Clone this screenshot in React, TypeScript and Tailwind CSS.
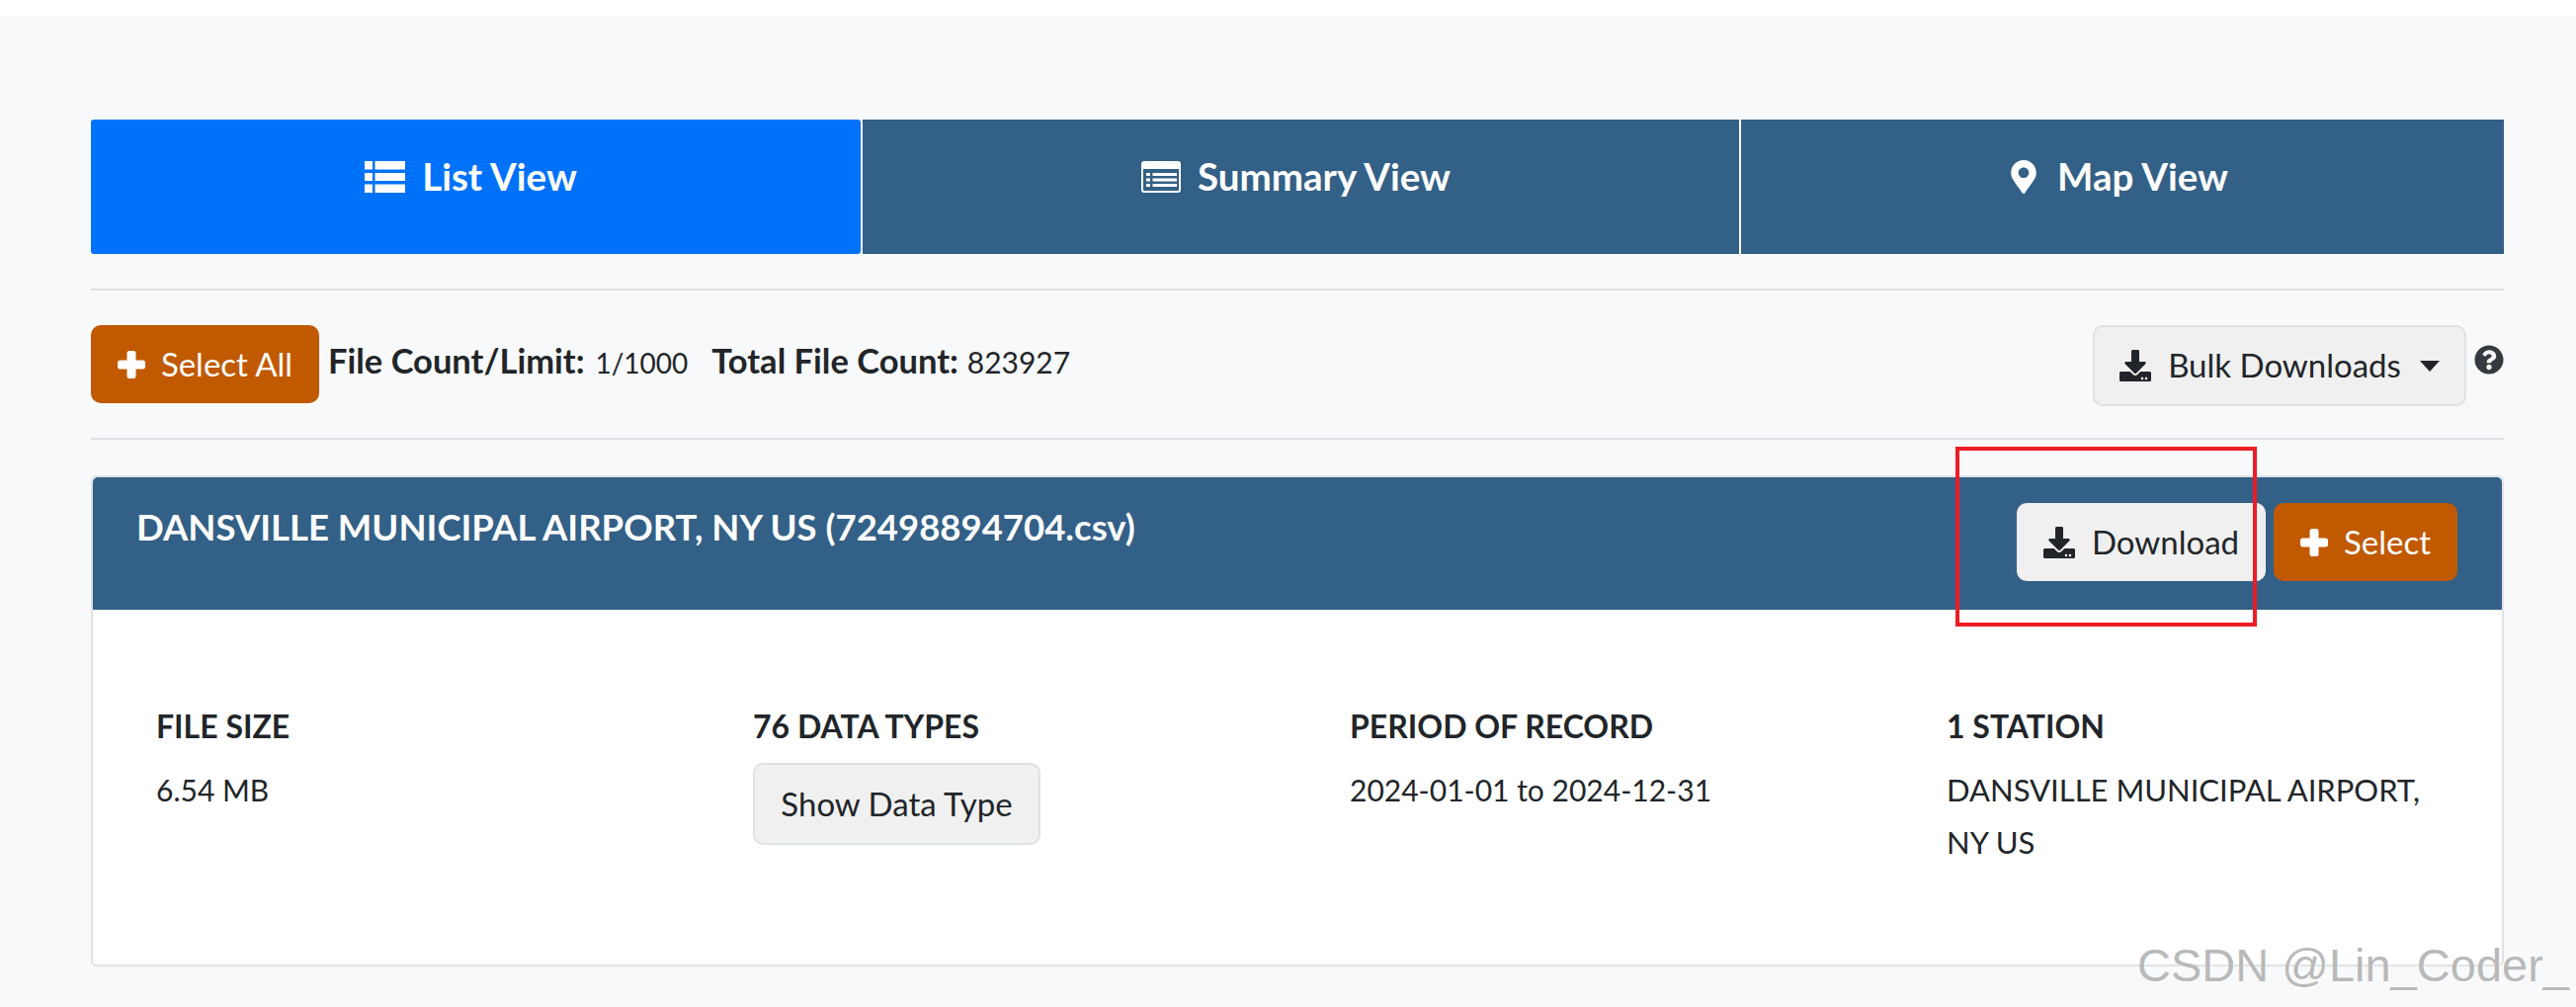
import { FaDownload, FaMapMarkerAlt, FaQuestionCircle } from "react-icons/fa";

const FONT = "font-['Lato','Noto_Sans',sans-serif]";

function ListIcon() {
  return (
    <svg viewBox="0 0 41 32" className="h-[32px] w-[41px]" fill="currentColor" aria-hidden="true">
      <path d="M0 0h8v8.500H0zM10.500 0H41v8.500H10.500zM0 12h8v8H0zM10.500 12H41v8H10.500zM0 23.500h8V32H0zM10.500 23.500H41V32H10.500z" />
    </svg>
  );
}

function SummaryIcon() {
  return (
    <svg viewBox="0 0 40 32" className="h-[32px] w-[40px]" fill="currentColor" aria-hidden="true">
      <path
        fillRule="evenodd"
        d="M3 0h34a3 3 0 0 1 3 3v26a3 3 0 0 1-3 3H3a3 3 0 0 1-3-3V3a3 3 0 0 1 3-3ZM2 8v21a1 1 0 0 0 1 1h34a1 1 0 0 0 1-1V8Z"
      />
      <path d="M5 12h4v3H5zM11.500 12H36v3H11.500zM5 17.500h4v3H5zM11.500 17.500H36v3H11.500zM5 23h4v3H5zM11.500 23H36v3H11.500z" />
    </svg>
  );
}

function PlusIcon() {
  return (
    <svg viewBox="0 0 28 28" className="size-[28px]" fill="currentColor" aria-hidden="true">
      <rect x="9.500" width="9" height="28" rx="2.500" />
      <rect y="9.500" width="28" height="9" rx="2.500" />
    </svg>
  );
}

function OrangeButton({ label, className }: { label: string; className: string }) {
  return (
    <button type="button" className={`flex h-[79px] items-center justify-center gap-[16px] rounded-[10px] bg-[#c05900] text-[33px] text-white ${className}`}>
      <PlusIcon />
      {label}
    </button>
  );
}

function Stat({ title, children }: { title: string; children: React.ReactNode }) {
  return (
    <div>
      <h3 className="text-[32px] leading-[53px] font-bold text-[#212529] uppercase">{title}</h3>
      <div className="mt-[12px] text-[30px] leading-[53px] text-[#212529]">{children}</div>
    </div>
  );
}

export default function App() {
  return (
    <div className={`relative h-[1019px] w-[2607px] overflow-hidden bg-white pt-[16px] ${FONT}`}>
      <main className="h-[1003px] bg-[#f8f9fa] pt-[105px] pr-[73px] pl-[92px]">
        {/* View tabs */}
        <nav className="flex h-[136px] gap-[2px] text-[38.500px] font-bold text-white">
          <a className="flex w-[779px] items-center justify-center gap-[17px] rounded-[3px] bg-[#0072f9] pr-[10px] pb-[20px]">
            <ListIcon />
            List View
          </a>
          <a className="flex w-[887px] items-center justify-center gap-[17px] bg-[#336086] pr-[10px] pb-[20px]">
            <SummaryIcon />
            Summary View
          </a>
          <a className="flex flex-1 items-center justify-center gap-[17px] bg-[#336086] pr-[10px] pb-[20px]">
            <FaMapMarkerAlt className="size-[34px]" />
            Map View
          </a>
        </nav>

        <hr className="mt-[35px] border-t-2 border-[#dee2e6]" />

        {/* Toolbar */}
        <div className="flex h-[149px] items-start pt-[35px]">
          <OrangeButton label="Select All" className="w-[231px]" />
          <p className="mt-[16px] ml-[9px] text-[34.500px] leading-[40px] text-[#212529]">
            <b>File Count/Limit:</b> <span className="ml-[2px] text-[28px]">1/1000</span>
            <b className="ml-[24px]">Total File Count:</b> <span className="text-[30px]">823927</span>
          </p>
          <div className="ml-auto flex items-start">
            <button type="button" className="flex h-[82px] w-[378px] items-center justify-center gap-[17px] rounded-[10px] border-2 border-[#dee2e6] bg-[#f0f0f0] text-[33px] text-[#212529]">
              <FaDownload className="size-[32px]" />
              Bulk Downloads
              <span className="ml-[2px] size-0 border-x-[10px] border-t-[11px] border-x-transparent border-t-[#212529]" />
            </button>
            <FaQuestionCircle className="mt-[20px] ml-[8px] size-[30px] text-[#343a40]" />
          </div>
        </div>

        <hr className="border-t-2 border-[#dee2e6]" />

        {/* Result card */}
        <section className="mt-[36px] h-[497px] rounded-[6px] border-2 border-[#dee2e6] bg-white">
          <header className="flex h-[134px] items-start justify-between rounded-t-[5px] bg-[#336086] pt-[26px] pr-[45px] pl-[44px]">
            <h2 className="mt-[4px] text-[36.500px] leading-[40px] font-bold text-white">DANSVILLE MUNICIPAL AIRPORT, NY US (72498894704.csv)</h2>
            <div className="flex gap-[8px]">
              <button type="button" className="flex h-[79px] w-[252px] items-center justify-center gap-[17px] rounded-[10px] bg-[#f0f0f0] text-[33px] text-[#212529]">
                <FaDownload className="size-[32px]" />
                Download
              </button>
              <OrangeButton label="Select" className="w-[186px]" />
            </div>
          </header>
          <div className="grid grid-cols-[604px_604px_604px_1fr] pt-[91px] pr-[60px] pl-[64px]">
            <Stat title="File Size">6.54 MB</Stat>
            <div>
              <h3 className="text-[32px] leading-[53px] font-bold text-[#212529] uppercase">76 Data Types</h3>
              <button type="button" className="mt-[11px] h-[83px] w-[291px] rounded-[10px] border-2 border-[#dee2e6] bg-[#f0f0f0] text-[33px] text-[#212529]">
                Show Data Type
              </button>
            </div>
            <Stat title="Period of Record">2024-01-01 to 2024-12-31</Stat>
            <Stat title="1 Station">
              <span className="text-[31px]">DANSVILLE MUNICIPAL AIRPORT, NY US</span>
            </Stat>
          </div>
        </section>
      </main>

      {/* Annotation drawn over the screenshot */}
      <div className="absolute top-[452px] left-[1979px] h-[182px] w-[305px] border-4 border-[#ee1c25]" />

      {/* Watermark */}
      <span className="absolute top-[949px] left-[2163px] font-['Liberation_Sans',sans-serif] text-[47px] leading-[56px] whitespace-nowrap text-[#b9b9b9] [text-shadow:1px_1px_0_#ffffff]">
        CSDN @Lin_Coder_
      </span>
    </div>
  );
}
